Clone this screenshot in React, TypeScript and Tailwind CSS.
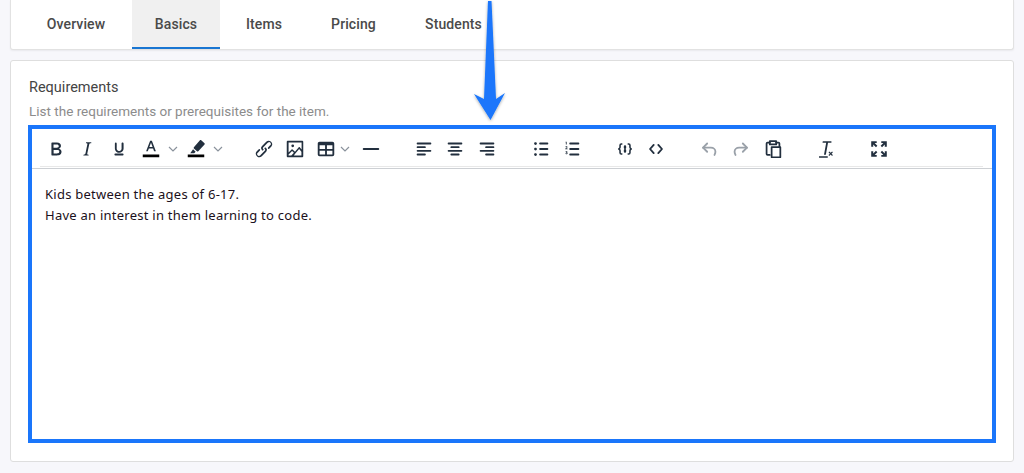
import React from "react";

const Ic = ({ children }: { children: React.ReactNode }) => (
  <svg width="22" height="22" viewBox="0 0 24 24" fill="#222f3e" className="block shrink-0">
    {children}
  </svg>
);

const Sk = ({ children, color = "#222f3e", sw = "1.8" }: { children: React.ReactNode; color?: string; sw?: string }) => (
  <svg width="22" height="22" viewBox="0 0 24 24" fill="none" stroke={color} strokeWidth={sw} strokeLinecap="round" strokeLinejoin="round" className="block shrink-0">
    {children}
  </svg>
);

const Chevron = ({ className = "" }: { className?: string }) => (
  <svg width="10" height="10" viewBox="0 0 10 10" fill="none" stroke="#8a929c" strokeWidth="1.2" className={`block shrink-0 ${className}`}>
    <path d="M1 3l4 4 4-4" />
  </svg>
);

const Btn = ({ children, c }: { children: React.ReactNode; c: string }) => (
  <div className={`flex h-[24px] shrink-0 items-center justify-center ${c}`}>{children}</div>
);

export default function App() {
  const tabs = ["Overview", "Basics", "Items", "Pricing", "Students"];
  const widths = ["w-[121px] pl-[9px]", "w-[88px]", "w-[88px]", "w-[91px]", "w-[109px]"];
  return (
    <div className="relative h-[473px] w-[1024px] overflow-hidden bg-[#f7f7fb] px-[10px] font-['Roboto',sans-serif]">
      <div className="flex h-[50px] items-stretch rounded-b-[3px] border border-t-0 border-[#e2e2e2] bg-white shadow-[0_1px_2px_rgba(0,0,0,0.06)]">
        {tabs.map((t, i) => (
          <div
            key={t}
            className={`flex items-center justify-center text-[14px] font-medium tracking-[0.1px] text-[#4a4a4a] ${widths[i]} ${
              i === 1 ? "border-b-2 border-[#1976d2] bg-[#f0f0f0] pt-[2px]" : ""
            }`}
          >
            {t}
          </div>
        ))}
      </div>

      <div className="mt-[10px] h-[402px] rounded-[3px] border border-[#dedede] bg-white pl-[18px] pr-[16px] pt-[17px]">
        <div className="text-[14.5px] leading-[20px] text-[#444444]">Requirements</div>
        <div className="mt-[3px] text-[13.5px] leading-[20px] text-[#8c8c8c]">List the requirements or prerequisites for the item.</div>

        <div className="-ml-[1px] mt-[4px] h-[318px] w-[968px] border-4 border-[#1a76fb] bg-white">
          <div className="border-b border-[#cdd0d4] pb-[1px]">
            <div className="ml-[8px] flex h-[38px] w-[943px] items-center border-b border-[#e8e8e8] pt-[3px]">
              <Btn c="w-[32px]">
                <Ic>
                  <path d="M7.800 19c-.3 0-.5 0-.6-.2l-.2-.5V5.700c0-.2 0-.4.2-.5l.6-.2h5c1.500 0 2.700.3 3.500 1 .7.6 1.100 1.400 1.100 2.500a3 3 0 01-.6 1.900c-.4.6-1 1-1.600 1.200.4.1.9.3 1.300.6s.8.7 1 1.200c.4.4.5 1 .5 1.600 0 1.300-.4 2.300-1.300 3-.8.7-2.100 1-3.800 1H7.800zm5-8.300c.6 0 1.200-.1 1.600-.5.4-.3.6-.7.6-1.300 0-1.100-.8-1.700-2.400-1.700H9.300v3.500h3.500zm.5 6c.7 0 1.300-.1 1.700-.4.4-.4.6-.9.6-1.500s-.2-1-.7-1.400c-.4-.3-1-.4-2-.4H9.400v3.800h4z" />
                </Ic>
              </Btn>
              <Btn c="w-[30px]">
                <Ic>
                  <path d="M16.700 4.700l-.1.9h-.3c-.6 0-1 0-1.400.3-.3.3-.4.6-.5 1.100l-2.100 9.800v.6c0 .5.4.8 1.400.8h.2l-.2.8H8l.2-.8h.2c1.100 0 1.800-.5 2-1.500l2-9.800.1-.5c0-.6-.4-.8-1.400-.8h-.3l.2-.9h5.800z" />
                </Ic>
              </Btn>
              <Btn c="w-[34px]">
                <Ic>
                  <path d="M16 5c.6 0 1 .4 1 1v5.500a4 4 0 01-.4 1.800l-1 1.400a5.300 5.300 0 01-5.500 1 4.100 4.100 0 01-2.200-2.400 4.800 4.800 0 01-.4-1.800V6c0-.6.4-1 1-1s1 .4 1 1v5.500c0 .3 0 .6.2 1a2.400 2.400 0 001.300 1.400c.3.2.7.2 1.100.2.4 0 .8 0 1.100-.2.4-.1.7-.3.9-.6l.5-.8c.2-.4.2-.7.2-1V6c0-.6.5-1 1-1zM8 17h8c.6 0 1 .4 1 1s-.4 1-1 1H8a1 1 0 010-2z" />
                </Ic>
              </Btn>
              <Btn c="w-[30px]">
                <Ic>
                  <path d="M3 18h18v3H3z" fill="#000000" />
                  <path d="M11.030 3h1.940l4.350 11.500h-1.960l-1.070-3H9.620l-1.070 3H6.680L11.030 3zm-.8 6.900h3.500L12 5.100 10.200 9.900z" />
                </Ic>
              </Btn>
              <Chevron className="ml-[2px]" />
              <Btn c="ml-[2px] w-[32px]">
                <Ic>
                  <path d="M3 18h18v3H3z" fill="#000000" />
                  <path d="M17.700 2.400l3.600 3.200c.4.4.4 1 0 1.400l-6.800 7.400c-.4.4-1 .4-1.400 0l-3.400-3c-.4-.4-.4-1 0-1.400l6.600-7.500c.4-.5 1-.5 1.400-.1zM8.800 12.400l2.800 2.500-1.600 1.600H5.700l3.100-4.100z" />
                </Ic>
              </Btn>
              <Chevron className="ml-[1px]" />

              <Btn c="ml-[25px] w-[32px]">
                <Ic>
                  <path d="M6.200 12.300a1 1 0 011.400 1.400l-2 2a2 2 0 102.600 2.800l4.800-4.800a1 1 0 000-1.400 1 1 0 111.400-1.300 2.900 2.900 0 010 4L9.600 20a3.900 3.900 0 01-5.500-5.500l2-2zm11.600-.6a1 1 0 01-1.400-1.400l2-2a2 2 0 10-2.600-2.800L11 10.300a1 1 0 000 1.400A1 1 0 119.600 13a2.900 2.900 0 010-4L14.400 4a3.900 3.900 0 015.500 5.500l-2 2z" />
                </Ic>
              </Btn>
              <Btn c="w-[30px]">
                <Ic>
                  <path d="M5 15.700l3.300-3.200c.3-.3.700-.3 1 0L12 15l4.100-5c.3-.4.800-.4 1.100 0l2 2.500V5H5v10.700zM5 18V19h3l2.800-2.900-2-2L5 17.900zm14-3l-2.500-3.100-4.800 5.900L10.800 19H19v-4zM4 3h16c.6 0 1 .4 1 1v16c0 .6-.4 1-1 1H4a1 1 0 01-1-1V4c0-.6.4-1 1-1zm5.500 7a1.500 1.500 0 110-3 1.500 1.500 0 010 3z" />
                </Ic>
              </Btn>
              <Btn c="ml-[2px] w-[28px]">
                <Ic>
                  <path d="M19 4a2 2 0 012 2v12a2 2 0 01-2 2H5a2 2 0 01-2-2V6c0-1.100.9-2 2-2h14zM5 14v4h6v-4H5zm14 0h-6v4h6v-4zm0-6h-6v4h6V8zM5 12h6V8H5v4z" />
                </Ic>
              </Btn>
              <Chevron />
              <Btn c="ml-[5px] w-[32px]">
                <Ic>
                  <path d="M4 11h16a1 1 0 010 2H4a1 1 0 010-2z" />
                </Ic>
              </Btn>

              <Btn c="ml-[21px] w-[32px]">
                <Ic>
                  <path d="M5 5h14a1 1 0 010 2H5a1 1 0 010-2zm0 4h8a1 1 0 010 2H5a1 1 0 010-2zm0 8h8a1 1 0 010 2H5a1 1 0 010-2zm0-4h14a1 1 0 010 2H5a1 1 0 010-2z" />
                </Ic>
              </Btn>
              <Btn c="w-[30px]">
                <Ic>
                  <path d="M5 5h14a1 1 0 010 2H5a1 1 0 010-2zm3 4h8a1 1 0 010 2H8a1 1 0 010-2zm0 8h8a1 1 0 010 2H8a1 1 0 010-2zm-3-4h14a1 1 0 010 2H5a1 1 0 010-2z" />
                </Ic>
              </Btn>
              <Btn c="ml-[2px] w-[30px]">
                <Ic>
                  <path d="M5 5h14a1 1 0 010 2H5a1 1 0 010-2zm6 4h8a1 1 0 010 2h-8a1 1 0 010-2zm0 8h8a1 1 0 010 2h-8a1 1 0 010-2zm-6-4h14a1 1 0 010 2H5a1 1 0 010-2z" />
                </Ic>
              </Btn>

              <Btn c="ml-[24px] w-[30px]">
                <Ic>
                  <path d="M11 5h8c.6 0 1 .4 1 1s-.4 1-1 1h-8a1 1 0 010-2zm0 6h8c.6 0 1 .4 1 1s-.4 1-1 1h-8a1 1 0 010-2zm0 6h8c.6 0 1 .4 1 1s-.4 1-1 1h-8a1 1 0 010-2zM4.500 6c0-.4.1-.8.4-1 .3-.4.7-.5 1.100-.5.4 0 .8.1 1 .4.4.3.5.7.5 1.100 0 .4-.1.8-.4 1-.3.4-.7.5-1.100.5-.4 0-.8-.1-1-.4-.4-.3-.5-.7-.5-1.100zm0 6c0-.4.1-.8.4-1 .3-.4.7-.5 1.100-.5.4 0 .8.1 1 .4.4.3.5.7.5 1.100 0 .4-.1.8-.4 1-.3.4-.7.5-1.100.5-.4 0-.8-.1-1-.4-.4-.3-.5-.7-.5-1.100zm0 6c0-.4.1-.8.4-1 .3-.4.7-.5 1.100-.5.4 0 .8.1 1 .4.4.3.5.7.5 1.100 0 .4-.1.8-.4 1-.3.4-.7.5-1.100.5-.4 0-.8-.1-1-.4-.4-.3-.5-.7-.5-1.100z" />
                </Ic>
              </Btn>
              <Btn c="ml-[1px] w-[30px]">
                <Ic>
                  <path d="M10 17h9c.6 0 1 .4 1 1s-.4 1-1 1h-9a1 1 0 010-2zm0-6h9c.6 0 1 .4 1 1s-.4 1-1 1h-9a1 1 0 010-2zm0-6h9c.6 0 1 .4 1 1s-.4 1-1 1h-9a1 1 0 110-2z" />
                  <path d="M5 4h1.200v3.200H5.300V5H5V4zM4.600 9.800c.1-.6.7-.9 1.300-.9.7 0 1.200.4 1.200 1 0 .5-.3.8-.7 1.100l-.6.5h1.400v.8H4.600v-.7l1.200-1c.3-.3.4-.5.4-.6 0-.2-.1-.3-.3-.3-.2 0-.3.1-.4.3l-.9-.2zM4.700 15.200c.1-.5.6-.8 1.200-.8.7 0 1.200.3 1.200.9 0 .3-.2.5-.4.7.3.1.5.4.5.7 0 .7-.6 1.100-1.300 1.100-.7 0-1.200-.3-1.300-.9l.9-.2c0 .2.2.3.4.3s.4-.1.4-.3-.2-.3-.5-.3h-.3v-.7h.3c.2 0 .4-.1.4-.3 0-.1-.1-.2-.3-.2s-.3.1-.4.3l-.8-.2z" />
                </Ic>
              </Btn>

              <Btn c="ml-[23px] w-[30px]">
                <Sk sw="1.700">
                  <path d="M8.500 6.500H8c-1 0-1.400.5-1.400 1.400v2.300c0 .9-.4 1.300-1.400 1.800 1 .5 1.400.9 1.400 1.800v2.300c0 .9.4 1.400 1.400 1.400h.5M15.500 6.500h.5c1 0 1.400.5 1.400 1.400v2.300c0 .9.4 1.300 1.400 1.800-1 .5-1.400.9-1.400 1.800v2.300c0 .9-.4 1.400-1.400 1.400h-.5" />
                  <path d="M12 9.300v1.400M12 13.300v1.400" strokeWidth="2.600" />
                </Sk>
              </Btn>
              <Btn c="ml-[1px] w-[30px]">
                <Sk sw="2">
                  <path d="M9.500 7.500L5.500 12l4 4.500M14.500 7.500l4 4.500-4 4.500" />
                </Sk>
              </Btn>

              <Btn c="ml-[23px] w-[30px]">
                <Sk color="#9aa1a9" sw="2">
                  <path d="M10 6L5.500 10.500 10 15" />
                  <path d="M5.500 10.500H14c3 0 5 2 5 4.500 0 1.500-.5 2.500-1 3.500" />
                </Sk>
              </Btn>
              <Btn c="ml-[1px] w-[32px]">
                <Sk color="#9aa1a9" sw="2">
                  <path d="M14 6l4.500 4.500L14 15" />
                  <path d="M18.500 10.500H10c-3 0-5 2-5 4.500 0 1.500.5 2.500 1 3.500" />
                </Sk>
              </Btn>
              <Btn c="w-[32px]">
                <Sk sw="1.900">
                  <path d="M8.500 18.500H6a1 1 0 01-1-1V6a1 1 0 011-1h2.500M15.500 5H18a1 1 0 011 1v3.500" />
                  <path d="M8.500 3.500h7v3.500h-7z" />
                  <path d="M10.500 10h9.500v11h-9.500z" />
                </Sk>
              </Btn>

              <Btn c="ml-[20px] w-[32px]">
                <Ic>
                  <path d="M9.600 3.500H19v1.800h-3.700l-2.400 13h-2l2.400-13H9.300zM5.500 20h9.500v1.500H5.500zM15.800 15.600l.9-.9 1.500 1.500 1.500-1.500.9.900-1.500 1.500 1.500 1.500-.9.900-1.500-1.500-1.500 1.500-.9-.9 1.500-1.500z" />
                </Ic>
              </Btn>

              <Btn c="ml-[22px] w-[32px]">
                <Ic>
                  <path d="M3.500 3.500h6v2H7.200l3 3-1.500 1.500-3-3v2.500h-2.200zM14.500 3.500h6v6.100h-2.200V7l-3 3-1.500-1.500 3-3h-2.300zM8.700 14l1.500 1.500-3 3h2.300v2h-6v-6.100h2.200V17zM15.300 14l3 3v-2.600h2.200v6.100h-6v-2h2.300l-3-3z" />
                </Ic>
              </Btn>
            </div>
          </div>

          <div className="ml-[13px] mt-[15px] font-['Noto_Sans',sans-serif] text-[13px] leading-[21px] tracking-[0.25px] text-[#1b1020]">
            <p>Kids between the ages of 6-17.</p>
            <p>Have an interest in them learning to code.</p>
          </div>
        </div>
      </div>

      <svg width="40" height="125" viewBox="0 0 40 125" className="absolute left-[470px] top-0">
        <defs>
          <filter id="ashadow" x="-30%" y="-10%" width="160%" height="120%">
            <feDropShadow dx="0" dy="1" stdDeviation="1.500" floodColor="#000000" floodOpacity="0.35" />
          </filter>
        </defs>
        <path d="M18 1h3.500L26 99l9-6-14.500 27L4 94l10 5z" fill="#1a76fb" filter="url(#ashadow)" />
      </svg>
    </div>
  );
}
